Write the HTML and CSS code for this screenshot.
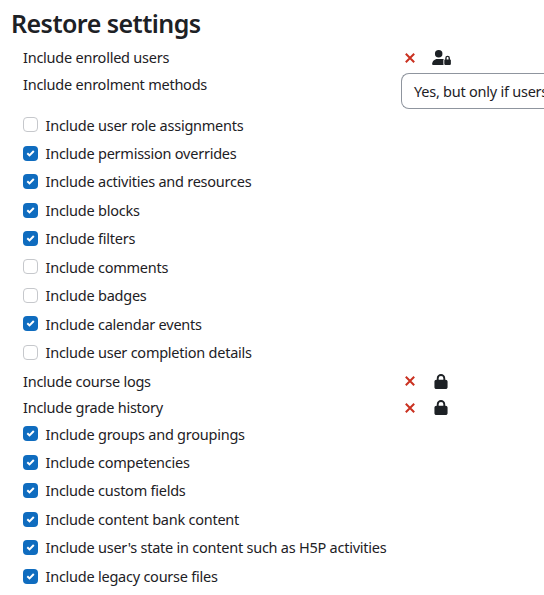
FILE: index.html
```
<!DOCTYPE html>
<html lang="en">
<head>
<meta charset="utf-8">
<title>Restore settings</title>
<link rel="stylesheet" href="styles.css">
</head>
<body>
<svg class="symbols" aria-hidden="true">
  <symbol id="tick" viewBox="0 0 15 15"><path d="M4.3 7.3 6.5 9.4 10.8 5" fill="none" stroke="#fff" stroke-width="2"/></symbol>
  <symbol id="cross" viewBox="0 0 10 10"><path d="M.8.8 9.2 9.2M9.2.8.8 9.2" fill="none" stroke="#ca3120" stroke-width="2"/></symbol>
  <symbol id="lock" viewBox="0 0 448 512"><path d="M144 144v48h160v-48a80 80 0 0 0-160 0zM80 192v-48a144 144 0 0 1 288 0v48h16c35 0 64 29 64 64v192c0 35-29 64-64 64H64c-35 0-64-29-64-64V256c0-35 29-64 64-64z" fill="#1d2125"/></symbol>
  <symbol id="user-lock" viewBox="0 0 640 512"><path d="M224 256a128 128 0 1 0 0-256 128 128 0 0 0 0 256zm-46 48C80 304 0 384 0 482c0 17 13 30 30 30h363c-6-9-9-20-9-32V352c0-18 7-33 18-45-26-3-101-3-132-3zM528 240c18 0 32 14 32 32v48h-64v-48c0-18 14-32 32-32zm-80 32v48c-18 0-32 14-32 32v128c0 18 14 32 32 32h160c18 0 32-14 32-32V352c0-18-14-32-32-32v-48a80 80 0 0 0-160 0z" fill="#1d2125"/></symbol>
</svg>
<h1>Restore settings</h1>
<main class="settings">
  <div class="row fixed users"><span class="label">Include enrolled users</span><svg class="cross"><use href="#cross"/></svg><svg class="user-lock"><use href="#user-lock"/></svg></div>
  <div class="row choice"><span class="label">Include enrolment methods</span><div class="select">Yes, but only if users</div></div>
  <div class="row"><span class="box"></span><span class="text">Include user role assignments</span></div>
  <div class="row"><span class="box on"><svg><use href="#tick"/></svg></span><span class="text">Include permission overrides</span></div>
  <div class="row"><span class="box on"><svg><use href="#tick"/></svg></span><span class="text">Include activities and resources</span></div>
  <div class="row"><span class="box on"><svg><use href="#tick"/></svg></span><span class="text">Include blocks</span></div>
  <div class="row"><span class="box on"><svg><use href="#tick"/></svg></span><span class="text">Include filters</span></div>
  <div class="row"><span class="box"></span><span class="text">Include comments</span></div>
  <div class="row"><span class="box"></span><span class="text">Include badges</span></div>
  <div class="row"><span class="box on"><svg><use href="#tick"/></svg></span><span class="text">Include calendar events</span></div>
  <div class="row"><span class="box"></span><span class="text">Include user completion details</span></div>
  <div class="row fixed logs"><span class="label">Include course logs</span><svg class="cross"><use href="#cross"/></svg><svg class="lock"><use href="#lock"/></svg></div>
  <div class="row fixed grades"><span class="label">Include grade history</span><svg class="cross"><use href="#cross"/></svg><svg class="lock"><use href="#lock"/></svg></div>
  <div class="row"><span class="box on"><svg><use href="#tick"/></svg></span><span class="text">Include groups and groupings</span></div>
  <div class="row"><span class="box on"><svg><use href="#tick"/></svg></span><span class="text">Include competencies</span></div>
  <div class="row"><span class="box on"><svg><use href="#tick"/></svg></span><span class="text">Include custom fields</span></div>
  <div class="row"><span class="box on"><svg><use href="#tick"/></svg></span><span class="text">Include content bank content</span></div>
  <div class="row"><span class="box on"><svg><use href="#tick"/></svg></span><span class="text">Include user's state in content such as H5P activities</span></div>
  <div class="row"><span class="box on"><svg><use href="#tick"/></svg></span><span class="text">Include legacy course files</span></div>
</main>
</body>
</html>
```
FILE: styles.css
```
* { box-sizing: border-box; }
body {
  margin: 0;
  height: 595px;
  overflow: hidden;
  background: #fff;
  color: #1d2125;
  font: 14.5px/22px "Segoe UI", "Noto Sans", "Open Sans", sans-serif;
  letter-spacing: -0.24px;
}
.symbols { display: none; }
h1 {
  margin: 0;
  padding: 5px 0 0 11px;
  height: 45px;
  font-size: 25px;
  line-height: 36px;
  font-weight: 600;
  letter-spacing: -0.55px;
}
.settings { padding-left: 23px; }
.row {
  display: flex;
  align-items: center;
  height: 28.45px;
  white-space: nowrap;
}
.row.fixed { height: 26.4px; }
.row.fixed .label { margin-top: -1px; }
.row.users .label { margin-top: -2.4px; }
.row.logs { margin-top: 1.2px; }
.row.grades { margin-bottom: -0.9px; }
.row.choice { height: 39.7px; align-items: flex-start; }
.label { flex: 0 0 382px; }
.choice .label { flex-basis: 378px; padding-top: 2px; }
.select {
  flex: 1;
  min-width: 0;
  height: 36px;
  margin-top: 2px;
  padding-left: 12px;
  border: 1px solid #8f959e;
  border-right: 0;
  border-radius: 8px 0 0 8px;
  line-height: 34px;
  overflow: hidden;
}
.box {
  flex: none;
  width: 15px;
  height: 15px;
  margin: -1px 7.5px 0 0;
  border: 1px solid #c6c8cc;
  border-radius: 4px;
}
.text { margin-top: -1.6px; }
.box.on { border: 0; background: #0f6cbf; }
.box svg { display: block; width: 15px; height: 15px; }
.cross { width: 10px; height: 10px; flex: none; }
.lock { width: 14px; height: 15px; margin-left: 19px; flex: none; }
.user-lock { width: 19px; height: 15px; margin: -1px 0 0 16.5px; flex: none; }
```
